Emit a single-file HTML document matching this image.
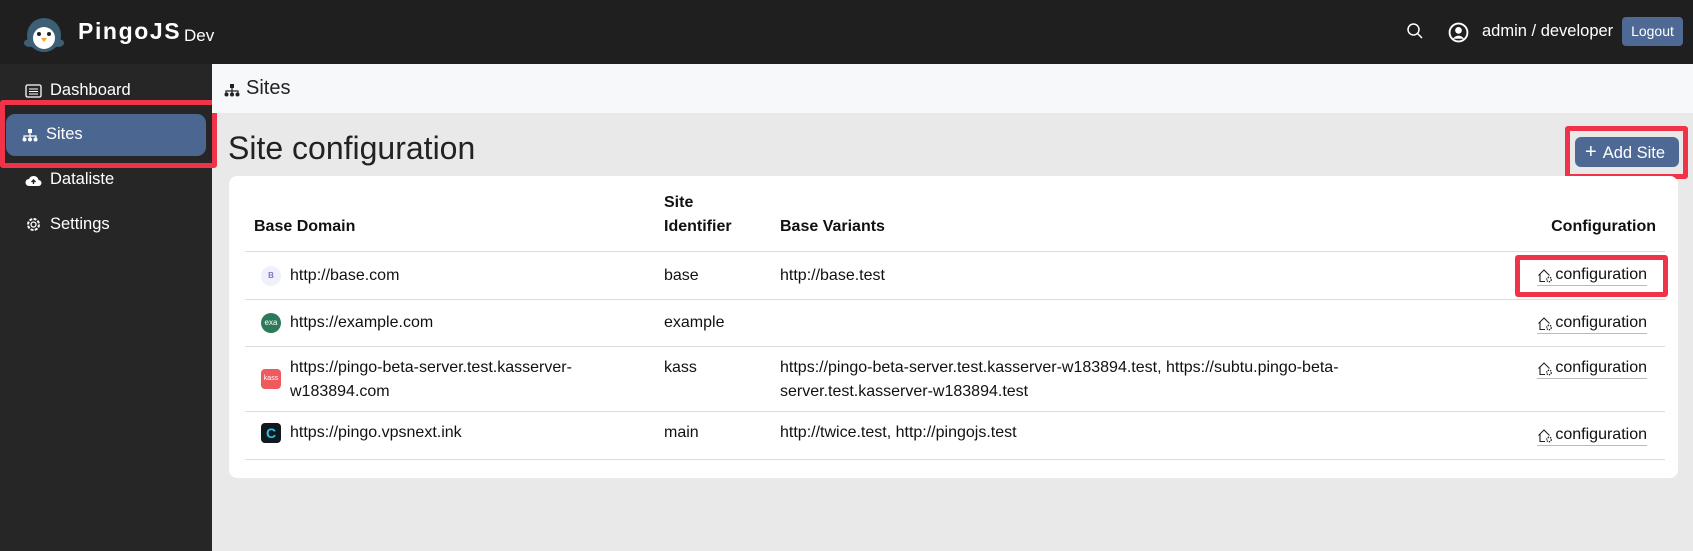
<!DOCTYPE html>
<html><head><meta charset="utf-8">
<style>
*{box-sizing:border-box;margin:0;padding:0}
body{width:1693px;height:551px;overflow:hidden;font-family:"Liberation Sans",Arial,sans-serif;background:#e9e9e9;position:relative;color:#212529}
.top{position:absolute;left:0;top:0;width:1693px;height:64px;background:#1f1f1f}
.side{position:absolute;left:0;top:64px;width:212px;height:487px;background:#262626}
.crumb{position:absolute;left:212px;top:64px;width:1481px;height:49px;background:#f7f8fa;font-size:20px;color:#222}
.abs{position:absolute}
.nav{position:absolute;left:25px;color:#fff;font-size:16.5px;display:flex;align-items:center;gap:8px}
.card{position:absolute;left:229px;top:176px;width:1449px;height:302px;background:#fff;border-radius:8px}
table{position:absolute;left:16px;top:15px;width:1420px;border-collapse:collapse;font-size:16px;color:#111}
th{font-weight:bold;text-align:left;vertical-align:bottom;padding:0 9px 12px 9px;line-height:24px}
td{padding:0 9px;vertical-align:top;line-height:24px;border-top:1px solid #dcdcdc}
tr:last-child td{border-bottom:1px solid #dcdcdc}
.ic{display:inline-block;width:20px;height:20px;border-radius:50%;vertical-align:middle;margin-right:9px;margin-left:7px;color:#fff;font-size:8px;text-align:center;line-height:20px}
.cfg{display:inline-flex;align-items:center;gap:2px;border-bottom:1px solid #bbb;line-height:20px;margin-right:9px}
.red{position:absolute;border:5px solid #f1334a;border-radius:3px}
</style></head><body>
<div class="top">
  <svg class="abs" style="left:22px;top:13px" width="44" height="40" viewBox="0 0 44 40"><ellipse cx="22" cy="22" rx="17" ry="17" fill="#3d5f75"/><ellipse cx="8" cy="30" rx="6" ry="4" fill="#3d5f75"/><ellipse cx="36" cy="30" rx="6" ry="4" fill="#3d5f75"/><ellipse cx="22" cy="25" rx="11" ry="11" fill="#fff"/><circle cx="17" cy="21" r="2" fill="#222"/><circle cx="27" cy="21" r="2" fill="#222"/><path d="M19 25 L25 25 L22 29Z" fill="#f5a623"/></svg>
  <div class="abs" style="left:78px;top:18px;color:#fff;font-weight:bold;font-size:23px;letter-spacing:1.6px">PingoJS</div>
  <div class="abs" style="left:184px;top:26px;color:#fff;font-size:17px">Dev</div>
  <svg class="abs" style="left:1406px;top:22px" width="18" height="18" viewBox="0 0 18 18"><circle cx="7.5" cy="7.5" r="5.5" fill="none" stroke="#fff" stroke-width="1.5"/><path d="M11.5 11.5L16 16" stroke="#fff" stroke-width="1.5"/></svg>
  <svg class="abs" style="left:1448px;top:22px" width="21" height="21" viewBox="0 0 20 20"><circle cx="10" cy="10" r="8.5" fill="none" stroke="#fff" stroke-width="1.8"/><circle cx="10" cy="8" r="3.2" fill="#fff"/><path d="M4.5 16 Q10 10 15.5 16" fill="#fff"/></svg>
  <div class="abs" style="left:1482px;top:22px;color:#fff;font-size:16.5px">admin / developer</div>
  <div class="abs" style="left:1622px;top:17px;width:61px;height:29px;background:#4e6a94;border-radius:4px;color:#fff;font-size:14px;text-align:center;line-height:29px">Logout</div>
</div>
<div class="side">
  <div class="nav" style="top:17px"><svg width="17" height="14" viewBox="0 0 17 14"><rect x="1" y="1" width="15" height="12" rx="1.5" fill="none" stroke="#fff" stroke-width="1.3"/><path d="M4 5h9M4 7.5h9M4 10h9" stroke="#fff" stroke-width="1.1"/></svg>Dashboard</div>
  <div class="abs" style="left:6px;top:50px;width:200px;height:42px;background:#4b6690;border-radius:9px"></div>
  <div class="nav" style="top:61px;left:22px"><svg width="16" height="14" viewBox="0 0 16 14"><rect x="6" y="1" width="4" height="4" fill="#fff"/><path d="M8 5v3M2 10V8h12v2M8 8v2" stroke="#fff" stroke-width="1.2" fill="none"/><circle cx="2.5" cy="11.5" r="2" fill="#fff"/><circle cx="8" cy="11.5" r="2" fill="#fff"/><circle cx="13.5" cy="11.5" r="2" fill="#fff"/></svg>Sites</div>
  <div class="red" style="left:0;top:36px;width:217px;height:68px"></div>
  <div class="nav" style="top:106px"><svg width="17" height="14" viewBox="0 0 17 14"><path d="M4 13a3.5 3.5 0 0 1 0-7 5 5 0 0 1 9.5 1 3 3 0 0 1 0 6z" fill="#fff"/><path d="M8.5 11V7M6.5 9l2-2 2 2" stroke="#262626" stroke-width="1.4" fill="none"/></svg>Dataliste</div>
  <div class="nav" style="top:151px"><svg width="17" height="17" viewBox="0 0 17 17"><circle cx="8.5" cy="8.5" r="5.5" fill="none" stroke="#fff" stroke-width="2" stroke-dasharray="3 1.3"/><circle cx="8.5" cy="8.5" r="2.5" fill="none" stroke="#fff" stroke-width="1.3"/></svg>Settings</div>
</div>
<div class="crumb"><svg class="abs" style="left:12px;top:19px" width="16" height="14" viewBox="0 0 16 14"><rect x="6" y="1" width="4" height="4" fill="#222"/><path d="M8 5v3M2 10V8h12v2M8 8v2" stroke="#222" stroke-width="1.2" fill="none"/><circle cx="2.5" cy="11.5" r="2" fill="#222"/><circle cx="8" cy="11.5" r="2" fill="#222"/><circle cx="13.5" cy="11.5" r="2" fill="#222"/></svg><span class="abs" style="left:34px;top:13px">Sites</span></div>
<div class="abs" style="left:228px;top:130px;font-size:32px;color:#222">Site configuration</div>
<div class="abs" style="left:1575px;top:137px;width:104px;height:30px;background:#4e6a94;border-radius:6px;color:#fff;font-size:16.5px;line-height:30px;padding-left:10px"><span style="font-weight:300;font-size:20px;margin-right:6px">+</span>Add Site</div>
<div class="red" style="left:1565px;top:126px;width:123px;height:53px"></div>
<div class="card">
<table>
<colgroup><col style="width:410px"><col style="width:116px"><col style="width:620px"><col></colgroup>
<tr style="height:57px"><th>Base Domain</th><th>Site<br>Identifier</th><th>Base Variants</th><th style="text-align:right">Configuration</th></tr>
<tr style="height:48px"><td style="padding-top:12px"><span class="ic" style="background:#eef0fb;color:#8a6fc4;font-weight:bold">B</span>http://base.com</td><td style="padding-top:12px">base</td><td style="padding-top:12px">http://base.test</td><td style="text-align:right;padding-top:13px"><span class="cfg"><svg width="16" height="15" viewBox="0 0 16 15"><path d="M1.5 7.5L7 2l5.5 5.5M3 6v7.5h5" fill="none" stroke="#222" stroke-width="1.1"/><circle cx="12" cy="11.5" r="2.3" fill="none" stroke="#222" stroke-width="1.3" stroke-dasharray="1.4 0.9"/></svg>configuration</span></td></tr>
<tr style="height:47px"><td style="padding-top:11px"><span class="ic" style="background:#2d7a5a">exa</span>https://example.com</td><td style="padding-top:11px">example</td><td></td><td style="text-align:right;padding-top:13px"><span class="cfg"><svg width="16" height="15" viewBox="0 0 16 15"><path d="M1.5 7.5L7 2l5.5 5.5M3 6v7.5h5" fill="none" stroke="#222" stroke-width="1.1"/><circle cx="12" cy="11.5" r="2.3" fill="none" stroke="#222" stroke-width="1.3" stroke-dasharray="1.4 0.9"/></svg>configuration</span></td></tr>
<tr style="height:65px"><td style="padding-top:9px;padding-left:45px;position:relative"><span class="ic" style="background:#ef5a5f;border-radius:4px;position:absolute;left:16px;top:22px;margin:0;font-size:7px">kass</span>https://pingo-beta-server.test.kasserver-<br>w183894.com</td><td style="padding-top:9px">kass</td><td style="padding-top:9px">https://pingo-beta-server.test.kasserver-w183894.test, https://subtu.pingo-beta-<br>server.test.kasserver-w183894.test</td><td style="text-align:right;padding-top:11px"><span class="cfg"><svg width="16" height="15" viewBox="0 0 16 15"><path d="M1.5 7.5L7 2l5.5 5.5M3 6v7.5h5" fill="none" stroke="#222" stroke-width="1.1"/><circle cx="12" cy="11.5" r="2.3" fill="none" stroke="#222" stroke-width="1.3" stroke-dasharray="1.4 0.9"/></svg>configuration</span></td></tr>
<tr style="height:48px"><td style="padding-top:9px"><span class="ic" style="background:#0f1a1f;border-radius:4px;color:#29c4e8;font-size:14px;font-weight:bold">C</span>https://pingo.vpsnext.ink</td><td style="padding-top:9px">main</td><td style="padding-top:9px">http://twice.test, http://pingojs.test</td><td style="text-align:right;padding-top:13px"><span class="cfg"><svg width="16" height="15" viewBox="0 0 16 15"><path d="M1.5 7.5L7 2l5.5 5.5M3 6v7.5h5" fill="none" stroke="#222" stroke-width="1.1"/><circle cx="12" cy="11.5" r="2.3" fill="none" stroke="#222" stroke-width="1.3" stroke-dasharray="1.4 0.9"/></svg>configuration</span></td></tr>
</table>
</div>
<div class="red" style="left:1515px;top:255px;width:153px;height:42px"></div>
</body></html>
